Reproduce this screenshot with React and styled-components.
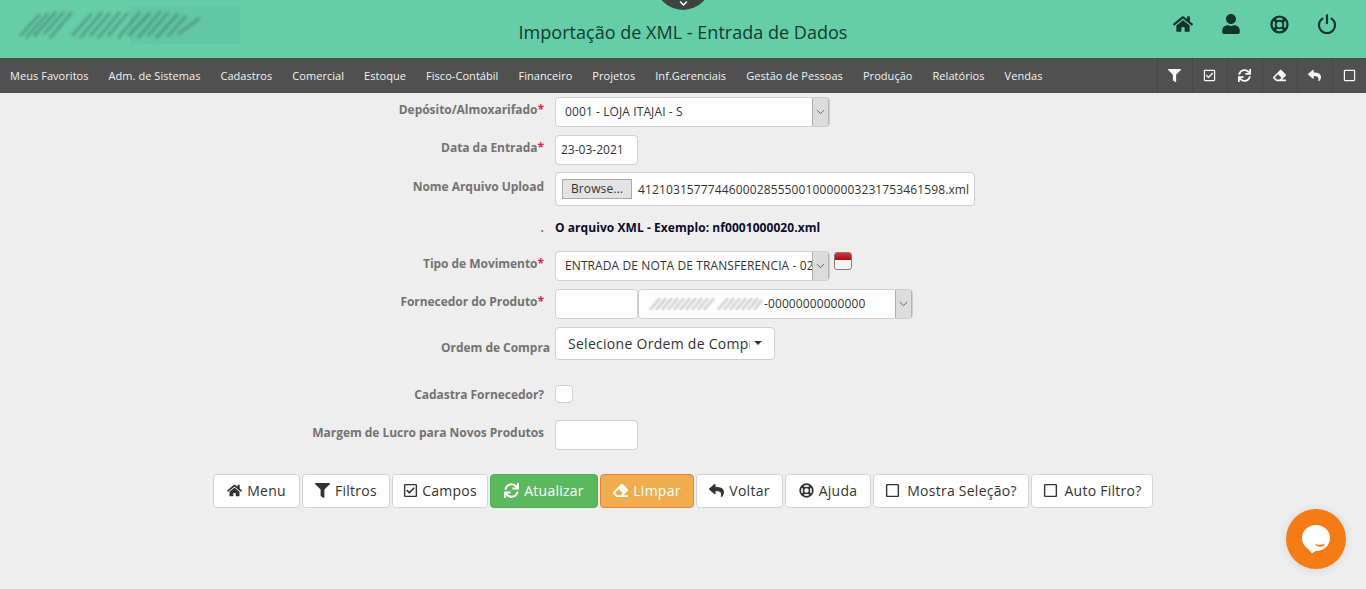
import React from "react";
import styled, { createGlobalStyle } from "styled-components";
import {
  FaHome,
  FaUser,
  FaFilter,
  FaRegCheckSquare,
  FaSync,
  FaEraser,
  FaReply,
  FaRegSquare,
  FaChevronDown,
} from "react-icons/fa";

const menus = [
  "Meus Favoritos",
  "Adm. de Sistemas",
  "Cadastros",
  "Comercial",
  "Estoque",
  "Fisco-Contábil",
  "Financeiro",
  "Projetos",
  "Inf.Gerenciais",
  "Gestão de Pessoas",
  "Produção",
  "Relatórios",
  "Vendas",
];

const PowerIcon = () => (
  <svg width="20" height="20" viewBox="0 0 20 20" fill="none" stroke="currentColor" strokeWidth="2.2" strokeLinecap="round">
    <path d="M5.4 4.600a8 8 0 1 0 9.200 0" />
    <path d="M10 1.200v8" />
  </svg>
);

// font awesome 4 style life ring: two rings joined by four diagonal bands
const LifeRingIcon = ({ size = 18 }) => (
  <svg width={size} height={size} viewBox="0 0 20 20" fill="none" stroke="currentColor">
    <circle cx="10" cy="10" r="8.400" strokeWidth="2.400" />
    <circle cx="10" cy="10" r="4" strokeWidth="2" />
    <path d="M4 4l3.200 3.200M16 4l-3.200 3.200M4 16l3.200-3.200M16 16l-3.200-3.200" strokeWidth="3.200" />
  </svg>
);

const Chevron = () => (
  <svg width="9" height="6" viewBox="0 0 9 6" fill="none" stroke="#666" strokeWidth="1">
    <path d="M0.800 1l3.700 3.600L8.200 1" />
  </svg>
);

const CalendarIcon = () => (
  <svg width="18" height="18" viewBox="0 0 18 18">
    <defs>
      <linearGradient id="calTop" x1="0" y1="0" x2="0" y2="1">
        <stop offset="0" stopColor="#d8323a" />
        <stop offset="1" stopColor="#a80c12" />
      </linearGradient>
    </defs>
    <rect x="0.500" y="0.500" width="17" height="17" rx="2.500" fill="#f4f4f4" stroke="#7d7d7d" />
    <path d="M1 3a2 2 0 0 1 2-2h12a2 2 0 0 1 2 2v5H1z" fill="url(#calTop)" />
  </svg>
);

const LogoSmear = () => (
  <svg width="240" height="40" viewBox="0 0 240 40">
    <defs>
      <filter id="smear">
        <feGaussianBlur stdDeviation="1.800" />
      </filter>
    </defs>
    <rect x="130" width="110" height="38" fill="#60c4a2" opacity="0.7" />
    <g filter="url(#smear)" stroke="#4c8a74" strokeWidth="2.600" opacity="0.8">
      <path d="M20 30L40 8M26 32L48 7M34 30L56 6M44 28L64 6M50 32L72 6" />
      <path d="M72 30L92 7M80 32L102 6M90 30L110 7M98 32L120 6M108 30L128 7M118 32L140 6M128 30L150 7M138 32L160 6M148 30L168 7M156 32L178 8M168 30L186 10M178 28L200 12" />
    </g>
  </svg>
);

const FieldSmear = () => (
  <svg width="116" height="14" viewBox="0 0 116 14">
    <defs>
      <filter id="fieldSmear">
        <feGaussianBlur stdDeviation="1" />
      </filter>
    </defs>
    <g filter="url(#fieldSmear)" stroke="#c8c8c8" strokeWidth="2.400">
      <path d="M2 13L12 1M8 13L18 1M14 13L24 1M20 13L30 1M26 13L36 1M32 13L42 1M38 13L48 1M44 13L54 1M50 13L60 1M56 13L66 1M70 13L80 1M76 13L86 1M82 13L92 1M88 13L98 1M94 13L104 1M100 13L110 1M106 13L114 3" />
    </g>
  </svg>
);

const ChatIcon = () => (
  <svg width="32" height="32" viewBox="0 0 32 32">
    <ellipse cx="16" cy="15" rx="14" ry="13" fill="#fff" />
    <path d="M7 24l5 6.500 4-3z" fill="#fff" />
    <path d="M15 21c3 1 7 1 10-.500-1.500 4-8 4.500-10 .500z" fill="#f57c14" />
  </svg>
);

const GlobalStyle = createGlobalStyle`
  html, body {
    margin: 0;
    padding: 0;
    height: 100%;
    overflow: hidden;
    background: #eeeeee;
    font-family: "Open Sans", sans-serif;
  }
`;

const Page = styled.div`
  width: 1366px;
  height: 589px;
  position: relative;
  overflow: hidden;
  background: #eeeeee;
`;

const Header = styled.header`
  height: 58px;
  background: #65cea9;
  display: grid;
  grid-template-columns: 1fr auto 1fr;
  align-items: start;
  position: relative;
`;

const Logo = styled.div`
  padding-top: 6px;
  height: 40px;
`;

const Title = styled.h1`
  margin: 0;
  padding-top: 19px;
  font-size: 18px;
  line-height: 26px;
  font-weight: 400;
  letter-spacing: 0.02px;
  color: #123a30;
`;

const HeaderIcons = styled.div`
  display: flex;
  justify-content: flex-end;
  align-items: center;
  gap: 28px;
  padding: 14px 29px 0 0;
  color: #10362c;
`;

const IconSlot = styled.span`
  width: 20px;
  height: 20px;
  display: flex;
  align-items: center;
  justify-content: center;
  font-size: 20px;
`;

const PullTab = styled.div`
  position: absolute;
  left: 655px;
  top: -46px;
  width: 56px;
  height: 56px;
  border-radius: 50%;
  background: #3c4543;
  color: #fff;
  display: flex;
  align-items: flex-end;
  justify-content: center;
  padding-bottom: 2px;
  box-sizing: border-box;
  font-size: 9px;
`;

const Nav = styled.nav`
  height: 35px;
  background: #505050;
  display: flex;
  align-items: center;
  justify-content: space-between;
  padding-left: 10px;
`;

const MenuList = styled.div`
  display: flex;
  gap: 20px;
`;

const MenuItem = styled.a`
  font-size: 11px;
  line-height: 35px;
  letter-spacing: 0.05px;
  color: #f2f2f2;
  white-space: nowrap;
`;

const Tools = styled.div`
  display: flex;
  height: 35px;
  margin-right: -1px;
`;

const Tool = styled.span`
  width: 35px;
  box-sizing: border-box;
  border-left: 1px solid #474747;
  padding-right: 2px;
  display: flex;
  align-items: center;
  justify-content: center;
  color: #f7f7f7;
  font-size: 13px;
`;

const Form = styled.form`
  display: flex;
  flex-direction: column;
  margin: 0;
`;

const Row = styled.div`
  display: grid;
  grid-template-columns: 544px 1fr;
  column-gap: 11px;
  margin-top: ${(p) => p.$top}px;
`;

const Label = styled.label`
  text-align: right;
  font-size: 12px;
  font-weight: 700;
  letter-spacing: -0.04px;
  line-height: 16px;
  color: #737373;
  padding-top: ${(p) => p.$top ?? 5}px;
  white-space: nowrap;
  margin-right: ${(p) => p.$shift || 0}px;
`;

const Req = styled.span`
  color: #e0283c;
`;

const Field = styled.div`
  display: flex;
  align-items: flex-start;
`;

const Box = styled.div`
  box-sizing: border-box;
  background: #fff;
  border: 1px solid #cfcfcf;
  border-radius: 4px;
  color: #333;
  font-size: 12px;
`;

const SelectBox = styled(Box)`
  width: ${(p) => p.$w}px;
  height: 30px;
  display: flex;
  align-items: stretch;
  overflow: hidden;
  letter-spacing: 0.1px;
`;

const SelectText = styled.span`
  flex: 1;
  min-width: 0;
  padding-left: ${(p) => p.$pad || 9}px;
  line-height: 28px;
  white-space: nowrap;
  overflow: hidden;
  display: flex;
  align-items: center;
`;

const SelectArrow = styled.span`
  width: 17px;
  flex: none;
  background: #dcdcdc;
  border-left: 1px solid #adadad;
  border-right: 1px solid #b4b4b4;
  box-sizing: border-box;
  display: flex;
  align-items: center;
  justify-content: center;
`;

const TextBox = styled(Box)`
  width: 83px;
  height: 30px;
  line-height: 28px;
  padding-left: 5px;
`;

const FileBox = styled(Box)`
  width: 420px;
  height: 34px;
  display: flex;
  align-items: center;
  padding-left: 6px;
  white-space: nowrap;
  letter-spacing: 0.12px;
`;

const Browse = styled.span`
  width: 70px;
  height: 20px;
  flex: none;
  box-sizing: border-box;
  background: #e3e3e3;
  border: 1px solid #a9a9a9;
  text-align: center;
  line-height: 18px;
  margin-right: 6px;
`;

const Hint = styled.span`
  font-size: 12px;
  font-weight: 700;
  letter-spacing: 0.06px;
  line-height: 16px;
  color: #0b0b2a;
`;

const Calendar = styled.span`
  margin: 1px 0 0 4px;
  height: 18px;
`;

const DropButton = styled(Box)`
  width: 220px;
  height: 33px;
  display: flex;
  align-items: center;
  padding: 0 0 1px 12px;
  font-size: 14px;
  letter-spacing: 0.28px;
`;

const DropText = styled.span`
  width: 182px;
  overflow: hidden;
  white-space: nowrap;
`;

const Caret = styled.span`
  margin-left: 4px;
  border-top: 4px solid #333;
  border-left: 4px solid transparent;
  border-right: 4px solid transparent;
`;

const Check = styled(Box)`
  width: 18px;
  height: 18px;
`;

const Actions = styled.div`
  display: flex;
  justify-content: center;
  gap: 2px;
  margin-top: 24px;
`;

const variants = {
  plain: { bg: "#fff", border: "#d4d4d4", color: "#333" },
  green: { bg: "#5cb85c", border: "#4cae4c", color: "#fff" },
  orange: { bg: "#f0ad4e", border: "#ea7f3c", color: "#fff" },
};

const ActionButton = styled.button`
  box-sizing: border-box;
  width: ${(p) => p.$w}px;
  height: 34px;
  padding: 0 0 1px;
  display: flex;
  align-items: center;
  justify-content: center;
  gap: ${(p) => p.$gap || 5}px;
  border-radius: 4px;
  border: 1px solid ${(p) => variants[p.$kind || "plain"].border};
  background: ${(p) => variants[p.$kind || "plain"].bg};
  color: ${(p) => variants[p.$kind || "plain"].color};
  font-family: "Open Sans", sans-serif;
  font-size: 14px;
  letter-spacing: 0.25px;
  white-space: nowrap;
  svg {
    font-size: 15px;
    flex: none;
  }
`;

const Chat = styled.div`
  position: absolute;
  left: 1286px;
  top: 509px;
  width: 60px;
  height: 60px;
  border-radius: 50%;
  background: #f57c14;
  box-shadow: 0 1px 8px rgba(120, 120, 160, 0.2);
  display: flex;
  align-items: center;
  justify-content: center;
`;

export default function App() {
  return (
    <Page>
      <GlobalStyle />
      <Header>
        <Logo>
          <LogoSmear />
        </Logo>
        <Title>Importação de XML - Entrada de Dados</Title>
        <HeaderIcons>
          <IconSlot><FaHome size={22} /></IconSlot>
          <IconSlot><FaUser /></IconSlot>
          <IconSlot><LifeRingIcon size={19} /></IconSlot>
          <IconSlot><PowerIcon /></IconSlot>
        </HeaderIcons>
        <PullTab><FaChevronDown /></PullTab>
      </Header>

      <Nav>
        <MenuList>
          {menus.map((m) => (
            <MenuItem key={m}>{m}</MenuItem>
          ))}
        </MenuList>
        <Tools>
          <Tool><FaFilter /></Tool>
          <Tool><FaRegCheckSquare /></Tool>
          <Tool><FaSync /></Tool>
          <Tool><FaEraser /></Tool>
          <Tool><FaReply /></Tool>
          <Tool><FaRegSquare /></Tool>
        </Tools>
      </Nav>

      <Form>
        <Row $top={4}>
          <Label>Depósito/Almoxarifado<Req>*</Req></Label>
          <Field>
            <SelectBox $w={275}>
              <SelectText>0001 - LOJA ITAJAI - S</SelectText>
              <SelectArrow><Chevron /></SelectArrow>
            </SelectBox>
          </Field>
        </Row>
        <Row $top={8}>
          <Label>Data da Entrada<Req>*</Req></Label>
          <Field><TextBox>23-03-2021</TextBox></Field>
        </Row>
        <Row $top={7}>
          <Label $top={7}>Nome Arquivo Upload</Label>
          <Field>
            <FileBox>
              <Browse>Browse...</Browse>
              41210315777446000285550010000003231753461598.xml
            </FileBox>
          </Field>
        </Row>
        <Row $top={14}>
          <Label $top={0}>.</Label>
          <Field><Hint>O arquivo XML - Exemplo: nf0001000020.xml</Hint></Field>
        </Row>
        <Row $top={15}>
          <Label>Tipo de Movimento<Req>*</Req></Label>
          <Field>
            <SelectBox $w={275}>
              <SelectText>ENTRADA DE NOTA DE TRANSFERENCIA - 02</SelectText>
              <SelectArrow><Chevron /></SelectArrow>
            </SelectBox>
            <Calendar><CalendarIcon /></Calendar>
          </Field>
        </Row>
        <Row $top={8}>
          <Label>Fornecedor do Produto<Req>*</Req></Label>
          <Field>
            <TextBox />
            <SelectBox $w={275}>
              <SelectText $pad={9}>
                <FieldSmear />-00000000000000
              </SelectText>
              <SelectArrow><Chevron /></SelectArrow>
            </SelectBox>
          </Field>
        </Row>
        <Row $top={8}>
          <Label $top={13} $shift={-6}>Ordem de Compra</Label>
          <Field>
            <DropButton>
              <DropText>Selecione Ordem de Compra</DropText>
              <Caret />
            </DropButton>
          </Field>
        </Row>
        <Row $top={25}>
          <Label $top={2}>Cadastra Fornecedor?</Label>
          <Field><Check /></Field>
        </Row>
        <Row $top={17}>
          <Label>Margem de Lucro para Novos Produtos</Label>
          <Field><TextBox /></Field>
        </Row>
      </Form>

      <Actions>
        <ActionButton type="button" $w={87}><FaHome />Menu</ActionButton>
        <ActionButton type="button" $w={88}><FaFilter />Filtros</ActionButton>
        <ActionButton type="button" $w={96} $gap={4}><FaRegCheckSquare />Campos</ActionButton>
        <ActionButton type="button" $w={108} $kind="green"><FaSync />Atualizar</ActionButton>
        <ActionButton type="button" $w={94} $kind="orange"><FaEraser />Limpar</ActionButton>
        <ActionButton type="button" $w={87}><FaReply />Voltar</ActionButton>
        <ActionButton type="button" $w={86}><LifeRingIcon size={15} />Ajuda</ActionButton>
        <ActionButton type="button" $w={156} $gap={7}><FaRegSquare />Mostra Seleção?</ActionButton>
        <ActionButton type="button" $w={122} $gap={7}><FaRegSquare />Auto Filtro?</ActionButton>
      </Actions>

      <Chat><ChatIcon /></Chat>
    </Page>
  );
}
